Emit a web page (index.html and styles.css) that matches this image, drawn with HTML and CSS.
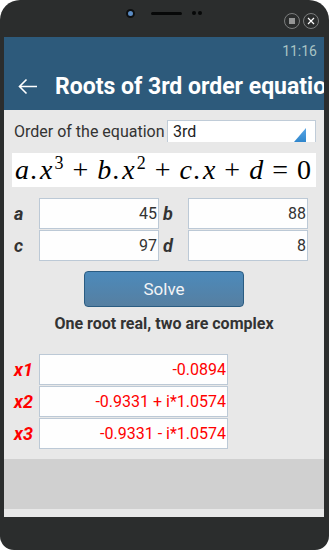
FILE: index.html
```html
<!DOCTYPE html>
<html lang="en">
<head>
    <meta charset="UTF-8">
    <meta name="viewport" content="width=device-width, initial-scale=1.0">
    <title>Roots of 3rd order equation</title>
    <link rel="stylesheet" href="styles.css">
</head>
<body>
    <div class="phone">
        <div class="bezel">
            <div></div>
            <div class="sensors">
                <span class="camera"></span>
                <span class="speaker"></span>
                <span class="dot"></span>
                <span class="dot"></span>
            </div>
            <div class="win-buttons">
                <span class="round-btn">
                    <svg width="10" height="10" viewBox="0 0 10 10"><path d="M2 3H8M2 5H8M2 7H8" stroke="#fff" stroke-width="1.2"/></svg>
                </span>
                <span class="round-btn">
                    <svg width="10" height="10" viewBox="0 0 10 10"><path d="M2 2L8 8M8 2L2 8" stroke="#fff" stroke-width="1.2"/></svg>
                </span>
            </div>
        </div>

        <div class="screen">
            <header class="appbar">
                <div class="status">11:16</div>
                <div class="titlebar">
                    <svg class="back" width="20" height="17" viewBox="0 0 20 17"><path d="M19 8.5H1.5M8.5 1.5L1.5 8.5L8.5 15.5" fill="none" stroke="#fff" stroke-width="1.6"/></svg>
                    <h1>Roots of 3rd order equation</h1>
                </div>
            </header>

            <main class="content">
                <div class="order-row">
                    <span class="order-label">Order of the equation</span>
                    <div class="select">3rd<span class="select-arrow"></span></div>
                </div>

                <div class="equation">
                    <i>a</i><span class="dot-op">.</span><i>x</i><sup>3</sup><span class="op">+</span><i>b</i><span class="dot-op">.</span><i>x</i><sup>2</sup><span class="op">+</span><i>c</i><span class="dot-op">.</span><i>x</i><span class="op">+</span><i>d</i><span class="op">=</span>0
                </div>

                <div class="coef-grid">
                    <label class="coef-label">a</label>
                    <input class="field" type="text" value="45">
                    <label class="coef-label second">b</label>
                    <input class="field" type="text" value="88">
                    <label class="coef-label">c</label>
                    <input class="field" type="text" value="97">
                    <label class="coef-label second">d</label>
                    <input class="field" type="text" value="8">
                </div>

                <button class="solve">Solve</button>

                <p class="verdict">One root real, two are complex</p>

                <div class="roots">
                    <label class="root-label">x1</label>
                    <input class="field root" type="text" value="-0.0894" readonly>
                    <label class="root-label">x2</label>
                    <input class="field root" type="text" value="-0.9331 + i*1.0574" readonly>
                    <label class="root-label">x3</label>
                    <input class="field root" type="text" value="-0.9331 - i*1.0574" readonly>
                </div>
            </main>

            <div class="navbar"></div>
            <div class="navstrip"></div>
        </div>
    </div>
</body>
</html>
```

FILE: styles.css
```css
body {
    margin: 0;
    background-color: #ffffff;
    font-family: Roboto, "Liberation Sans", sans-serif;
}
.phone {
    width: 329px;
    height: 550px;
    background-color: #2b2d2d;
    border-radius: 20px 20px 14px 14px;
    display: flex;
    flex-direction: column;
}
.bezel {
    height: 37px;
    display: grid;
    grid-template-columns: 1fr auto 1fr;
}
.sensors {
    display: flex;
    align-items: center;
    height: 26px;
}
.camera {
    width: 5px;
    height: 5px;
    border-radius: 50%;
    background-color: #5b8cc4;
    border: 2px solid #0d0f10;
    margin-right: 16px;
}
.speaker {
    width: 31px;
    height: 3px;
    border-radius: 2px;
    background-color: #070808;
    margin-right: 10px;
}
.dot {
    width: 4px;
    height: 4px;
    border-radius: 50%;
    background-color: #070808;
    margin-right: 2px;
}
.win-buttons {
    display: flex;
    justify-content: flex-end;
    align-items: center;
    gap: 3px;
    padding: 5px 10px 0 0;
    height: 32px;
}
.round-btn {
    width: 14px;
    height: 14px;
    border: 1px solid #7b7d7d;
    border-radius: 50%;
    display: flex;
    justify-content: center;
    align-items: center;
}
.screen {
    margin: 0 5px 0 4px;
    height: 480px;
    background-color: #e8e8e8;
    display: flex;
    flex-direction: column;
}
.appbar {
    background-color: #2d5a7b;
    height: 73px;
}
.status {
    height: 26px;
    line-height: 26px;
    padding: 1px 7px 0 0;
    box-sizing: border-box;
    text-align: right;
    font-size: 14px;
    color: #a9c4c4;
}
.titlebar {
    height: 47px;
    display: flex;
    align-items: center;
    overflow: hidden;
}
.back {
    margin-left: 14px;
    margin-right: 17px;
    flex-shrink: 0;
}
.titlebar h1 {
    margin: 0;
    font-size: 23px;
    font-weight: bold;
    color: #ffffff;
    white-space: nowrap;
}
.content {
    flex: 1;
    padding: 10px 8px 0 8px;
}
.order-row {
    display: flex;
    align-items: flex-end;
    height: 22px;
}
.order-label {
    padding-left: 2px;
    width: 153px;
    font-size: 16px;
    color: #333333;
    line-height: 20px;
}
.select {
    position: relative;
    width: 149px;
    height: 22px;
    background-color: #ffffff;
    border: 1px solid #c0ccd8;
    border-bottom: none;
    padding-left: 5px;
    box-sizing: border-box;
    font-size: 16px;
    line-height: 21px;
    color: #222222;
}
.select-arrow {
    position: absolute;
    right: 9px;
    bottom: 0;
    width: 12px;
    height: 14px;
    background: linear-gradient(#5aa6e6, #2f86cc);
    clip-path: polygon(100% 0, 100% 100%, 0 100%);
}
.equation {
    margin-top: 11px;
    height: 34px;
    background-color: #ffffff;
    font-family: "Liberation Serif", serif;
    font-size: 28px;
    line-height: 34px;
    padding-left: 3px;
    color: #000000;
    white-space: nowrap;
}
.equation sup {
    font-size: 18px;
    line-height: 0;
    margin-left: 2px;
}
.equation .op {
    padding: 0 9px;
}
.equation .dot-op {
    padding: 0 3px 0 1px;
}
.coef-grid {
    margin-top: 11px;
    display: grid;
    grid-template-columns: 27px 120px 29px 120px;
    grid-auto-rows: 31px;
    row-gap: 1px;
}
.coef-label {
    padding-left: 2px;
    font-size: 18px;
    font-weight: bold;
    font-style: italic;
    color: #333333;
    line-height: 31px;
}
.coef-label.second {
    padding-left: 4px;
}
.field {
    margin: 0;
    width: 100%;
    height: 31px;
    box-sizing: border-box;
    border: 1px solid #bcc9d6;
    background-color: #fefefe;
    text-align: right;
    padding: 0 1px 0 2px;
    font-family: Roboto, "Liberation Sans", sans-serif;
    font-size: 16px;
    color: #333333;
    outline: none;
}
.solve {
    display: block;
    margin: 10px auto 0;
    width: 160px;
    height: 36px;
    border: 1px solid #2a5c82;
    border-radius: 4px;
    background: linear-gradient(#4c8abb, #567fa1);
    color: #f2f4f6;
    font-family: Roboto, "Liberation Sans", sans-serif;
    font-size: 17px;
}
.verdict {
    margin: 0;
    padding: 7px 0 20px;
    line-height: 20px;
    text-align: center;
    font-size: 16px;
    font-weight: bold;
    color: #333333;
}
.roots {
    display: grid;
    grid-template-columns: 27px 189px;
    grid-auto-rows: 31px;
    row-gap: 1px;
}
.root-label {
    padding-left: 2px;
    font-size: 18px;
    font-weight: bold;
    font-style: italic;
    color: #ff0000;
    line-height: 31px;
}
.field.root {
    color: #ff0000;
}
.navbar {
    height: 50px;
    background-color: #d0d0d0;
}
.navstrip {
    height: 8px;
    background-color: #e8e8e8;
}
```
